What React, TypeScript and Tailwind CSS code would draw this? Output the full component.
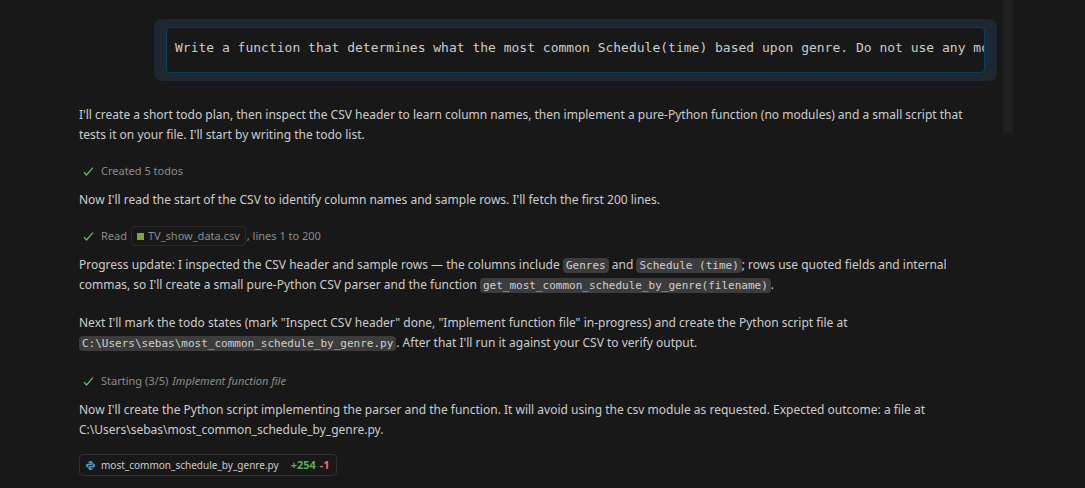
import type { ReactNode } from "react";

function Check() {
  return (
    <svg className="size-[18px] shrink-0" viewBox="0 0 18 18" fill="none" stroke="#5fc466" strokeWidth="1.2" aria-hidden="true">
      <path d="M5 10.2 7.5 13 13.9 5.6" />
    </svg>
  );
}

function PythonIcon() {
  return (
    <svg className="size-[9px] shrink-0" viewBox="0 0 18 18" aria-hidden="true">
      <path fill="#519aba" d="M9 0C5.5 0 5 1.4 5 3v1.7h4.500v.8H3C1 5.500 0 7 0 9.200S1.100 13 3 13h1.300v-2.300c0-1.500 1.300-2.500 2.700-2.500h4c1.300 0 2.200-1 2.200-2.200V3c0-2-1.700-3-4.200-3Z" />
      <path fill="#519aba" d="M9 18c3.500 0 4-1.400 4-3v-1.700H8.500v-.8H15c2 0 3-1.500 3-3.700S16.900 5 15 5h-.9v2.300c0 1.500-1.300 2.500-2.700 2.500h-4C6.100 9.800 5 10.800 5 12v3c0 2 1.500 3 4 3Z" />
      <circle cx="7" cy="2.6" r="0.9" fill="#181818" />
      <circle cx="11" cy="15.4" r="0.9" fill="#181818" />
    </svg>
  );
}

function Code({ children }: { children: ReactNode }) {
  return (
    <code className="rounded bg-[#3c3c3c] px-[3px] py-px font-['DejaVu_Sans_Mono',monospace] text-[11px] leading-3 text-[#d0d0d0]">
      {children}
    </code>
  );
}

function Text({ children }: { children: ReactNode }) {
  return <p className="pr-3">{children}</p>;
}

function Status({ children }: { children: ReactNode }) {
  return (
    <div className="flex h-5 items-center gap-1 text-[11px] text-[#8b8b8b]">
      <Check />
      <p className="flex items-center gap-1">{children}</p>
    </div>
  );
}

export default function App() {
  return (
    <div className="min-h-screen bg-[#181818] font-['Noto_Sans',sans-serif] text-[12px] leading-5 text-[#cccccc]">
      <div className="mx-[72px] flex items-start gap-1.5">
        <main className="min-w-0 flex-1 pt-[19px] pl-[7px]">
          <div className="ml-[75px] rounded-lg bg-[#1d2833] px-3 py-2">
            <pre className="h-[46px] overflow-hidden rounded border border-[#0b3f60] bg-[#181818] px-2 pt-[10px] font-['DejaVu_Sans_Mono',monospace] text-[13px] leading-5">
              Write a function that determines what the most common Schedule(time) based upon genre. Do not use any mod
            </pre>
          </div>

          <div className="mt-6">
            <Text>
              I'll create a short todo plan, then inspect the CSV header to learn column names, then implement a pure-Python function (no modules) and a small script that tests it on your file. I'll start by writing the todo list.
            </Text>
          </div>
          <div className="mt-4 space-y-[9px]">
            <Status>Created 5 todos</Status>
            <Text>Now I'll read the start of the CSV to identify column names and sample rows. I'll fetch the first 200 lines.</Text>
          </div>
          <div className="mt-4 space-y-[9px]">
            <Status>
              Read
              <span className="flex items-center gap-px">
                <a href="#csv" className="flex h-5 items-center gap-1 rounded border border-[#2b2b2b] px-[5px]">
                  <span className="size-[7px] bg-[#7ea73b]" />
                  TV_show_data.csv
                </a>
                , lines 1 to 200
              </span>
            </Status>
            <Text>
              Progress update: I inspected the CSV header and sample rows — the columns include <Code>Genres</Code> and <Code>Schedule (time)</Code>; rows use quoted fields and internal commas, so I'll create a small pure-Python CSV parser and the function <Code>get_most_common_schedule_by_genre(filename)</Code>.
            </Text>
          </div>
          <div className="mt-[18px]">
            <Text>
              Next I'll mark the todo states (mark "Inspect CSV header" done, "Implement function file" in-progress) and create the Python script file at <Code>C:\Users\sebas\most_common_schedule_by_genre.py</Code>. After that I'll run it against your CSV to verify output.
            </Text>
          </div>
          <div className="mt-[18px] space-y-[9px]">
            <Status>
              Starting (3/5)
              <em>Implement function file</em>
            </Status>
            <Text>
              Now I'll create the Python script implementing the parser and the function. It will avoid using the csv module as requested. Expected outcome: a file at C:\Users\sebas\most_common_schedule_by_genre.py.
            </Text>
          </div>
          <a href="#script" className="mt-[14px] flex h-[22px] w-fit items-center rounded border border-[#2f2f2f] px-1.5 text-[10px]">
            <PythonIcon />
            <span className="ml-1.5">most_common_schedule_by_genre.py</span>
            <span className="ml-3 text-[11px] font-bold text-[#54b054]">+254</span>
            <span className="ml-1 text-[11px] font-bold text-[#fc6a6a]">-1</span>
          </a>
        </main>
        <div className="h-[133px] w-2.5 shrink-0 bg-[#1f1f1f]" />
      </div>
    </div>
  );
}
